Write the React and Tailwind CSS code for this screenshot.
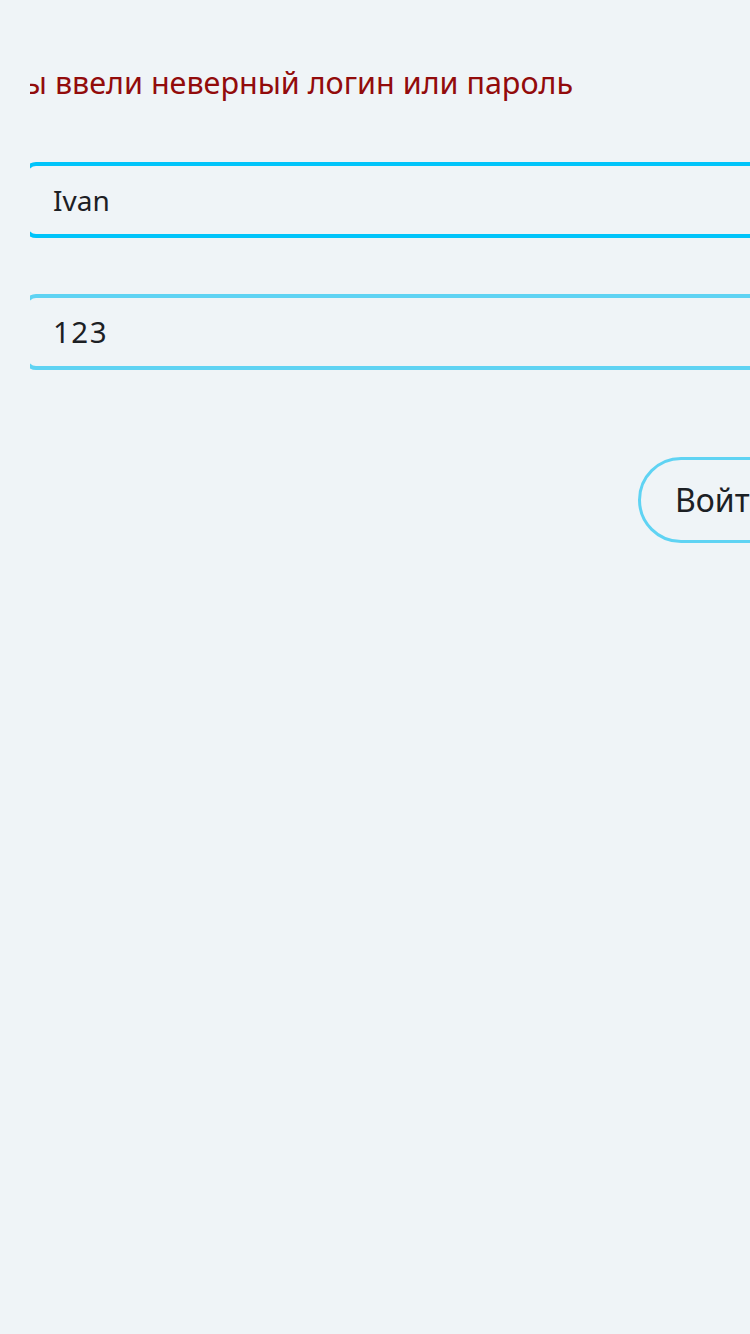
import React from 'react';

export default function App() {
  return (
    <div
      className="min-h-[1334px] w-[750px] bg-[#eff4f7] overflow-hidden"
      style={{ fontFamily: '"Noto Sans", "Open Sans", sans-serif' }}
    >
      <div className="ml-[30px] overflow-hidden pt-[61px]">
        <div className="w-[900px]">
          <p className="-ml-[26px] text-[30.5px] leading-[42px] text-[#920b0b] whitespace-nowrap">
            Вы ввели неверный логин или пароль
          </p>

          <div className="mt-[59px] -ml-[6px] h-[76px] rounded-[12px] border-4 border-[#00c4fa] flex items-center pl-[25px]">
            <span className="text-[28px] text-[#1c2024]">Ivan</span>
          </div>

          <div className="mt-[56px] -ml-[6px] h-[76px] rounded-[12px] border-4 border-[#5fd3f3] flex items-center pl-[25px]">
            <span className="text-[29.5px] tracking-[1.5px] text-[#1c2024]">123</span>
          </div>

          <div className="mt-[87px] flex">
            <button
              type="button"
              className="ml-[608px] h-[86px] w-[220px] rounded-full border-[3px] border-[#5fd3f3] flex items-center pl-[34px] text-[32px] text-[#1c2024]"
            >
              Войти
            </button>
          </div>
        </div>
      </div>
    </div>
  );
}
